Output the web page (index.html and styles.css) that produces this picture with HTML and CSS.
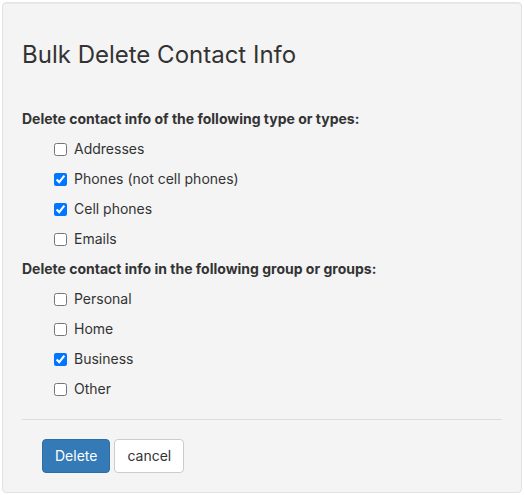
FILE: index.html
```html
<!DOCTYPE html>
<html lang="en">
<head>
  <meta charset="UTF-8">
  <title>Bulk Delete Contact Info</title>
  <link rel="stylesheet" href="styles.css">
</head>
<body>
  <form class="well">
    <h3>Bulk Delete Contact Info</h3>

    <div class="group">
      <p class="group-label">Delete contact info of the following type or types:</p>
      <label class="check"><input type="checkbox" name="type" value="address"> Addresses</label>
      <label class="check"><input type="checkbox" name="type" value="phone" checked> Phones (not cell phones)</label>
      <label class="check"><input type="checkbox" name="type" value="cell" checked> Cell phones</label>
      <label class="check"><input type="checkbox" name="type" value="email"> Emails</label>
    </div>

    <div class="group">
      <p class="group-label">Delete contact info in the following group or groups:</p>
      <label class="check"><input type="checkbox" name="group" value="personal"> Personal</label>
      <label class="check"><input type="checkbox" name="group" value="home"> Home</label>
      <label class="check"><input type="checkbox" name="group" value="business" checked> Business</label>
      <label class="check"><input type="checkbox" name="group" value="other"> Other</label>
    </div>

    <hr>

    <div class="actions">
      <button type="submit" class="btn btn-primary">Delete</button>
      <button type="button" class="btn btn-default">cancel</button>
    </div>
  </form>
</body>
</html>
```

FILE: styles.css
```css
body {
  font-family: Inter, "Noto Sans", sans-serif;
  font-size: 14px;
  line-height: 20px;
  color: #333;
  margin: 2px;
  background: #fff;
}
.well {
  background-color: #f4f4f4;
  border: 1px solid #e3e3e3;
  border-radius: 4px;
  box-shadow: inset 0 1px 1px rgba(0, 0, 0, .05);
  padding: 19px;
}
h3 {
  font-size: 24px;
  font-weight: 400;
  line-height: 26px;
  margin: 20px 0 41px;
}
.group-label {
  font-weight: 700;
  margin: 0 0 10px;
}
.check {
  display: flex;
  align-items: center;
  margin: 0 0 10px 32px;
}
.check input {
  width: 13px;
  height: 13px;
  margin: 0 7px 0 0;
}
hr {
  border: 0;
  border-top: 1px solid #ddd;
  margin: 20px 0 19px;
}
.actions {
  padding-left: 20px;
  display: flex;
  gap: 4px;
}
.btn {
  font-family: inherit;
  font-size: 14px;
  line-height: 20px;
  padding: 6px 12px;
  border: 1px solid transparent;
  border-radius: 4px;
  cursor: pointer;
}
.btn-primary {
  color: #fff;
  background-color: #337ab7;
  border-color: #2e6da4;
}
.btn-default {
  color: #333;
  background-color: #fff;
  border-color: #ccc;
}
```
